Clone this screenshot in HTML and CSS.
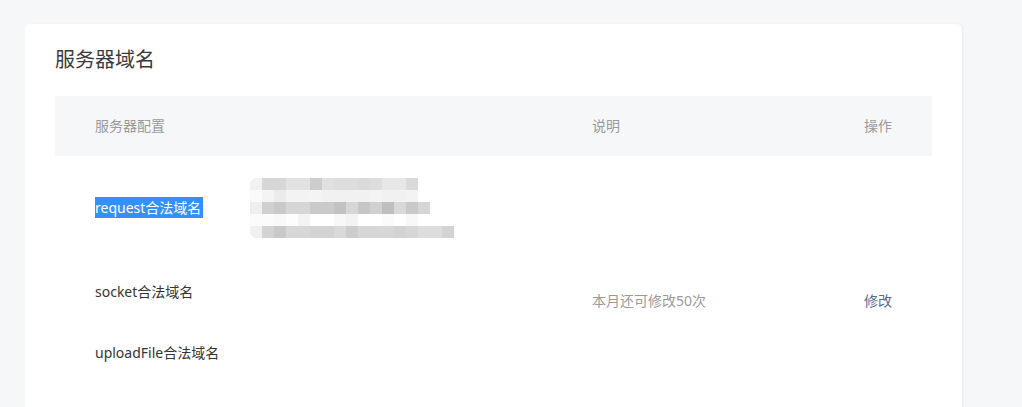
FILE: index.html
```html
<!DOCTYPE html>
<html lang="zh-CN">
<head>
<meta charset="utf-8">
<title>服务器域名</title>
<link rel="stylesheet" href="styles.css">
</head>
<body>
<div class="page">
  <section class="card">
    <h2 class="card-title">服务器域名</h2>
    <div class="table">
      <div class="thead">
        <div class="cell c1">服务器配置</div>
        <div class="cell c2">说明</div>
        <div class="cell c3">操作</div>
      </div>
      <div class="tbody">
        <div class="cell c1 list">
          <div class="item">
            <div class="label"><span class="selected">request合法域名 </span></div>
            <div class="values">
              <svg class="mosaic" width="204" height="60" viewBox="0 0 204 60">
                <g>
                  <rect x="0" y="0" width="12" height="12" fill="#f2f2f2"/>
                  <rect x="12" y="0" width="12" height="12" fill="#d7d7d7"/>
                  <rect x="24" y="0" width="12" height="12" fill="#d7d7d7"/>
                  <rect x="36" y="0" width="12" height="12" fill="#e2e2e2"/>
                  <rect x="48" y="0" width="12" height="12" fill="#e2e2e2"/>
                  <rect x="60" y="0" width="12" height="12" fill="#cdcdcd"/>
                  <rect x="72" y="0" width="12" height="12" fill="#e0e0e0"/>
                  <rect x="84" y="0" width="12" height="12" fill="#dddddd"/>
                  <rect x="96" y="0" width="12" height="12" fill="#dddddd"/>
                  <rect x="108" y="0" width="12" height="12" fill="#dadada"/>
                  <rect x="120" y="0" width="12" height="12" fill="#dddddd"/>
                  <rect x="132" y="0" width="12" height="12" fill="#e7e7e7"/>
                  <rect x="144" y="0" width="12" height="12" fill="#e7e7e7"/>
                  <rect x="156" y="0" width="12" height="12" fill="#dadada"/>
                </g>
                <g>
                  <rect x="0" y="12" width="12" height="12" fill="#fafafa"/>
                  <rect x="12" y="12" width="12" height="12" fill="#f4f4f4"/>
                  <rect x="24" y="12" width="12" height="12" fill="#ebebeb"/>
                  <rect x="36" y="12" width="12" height="12" fill="#f3f3f3"/>
                  <rect x="48" y="12" width="12" height="12" fill="#f3f3f3"/>
                  <rect x="60" y="12" width="12" height="12" fill="#f4f4f4"/>
                  <rect x="72" y="12" width="12" height="12" fill="#f1f1f1"/>
                  <rect x="84" y="12" width="12" height="12" fill="#f1f1f1"/>
                  <rect x="96" y="12" width="12" height="12" fill="#f1f1f1"/>
                  <rect x="108" y="12" width="12" height="12" fill="#f1f1f1"/>
                  <rect x="120" y="12" width="12" height="12" fill="#f3f3f3"/>
                  <rect x="132" y="12" width="12" height="12" fill="#f1f1f1"/>
                  <rect x="144" y="12" width="12" height="12" fill="#f1f1f1"/>
                  <rect x="156" y="12" width="12" height="12" fill="#f3f3f3"/>
                </g>
                <g>
                  <rect x="0" y="24" width="12" height="12" fill="#efefef"/>
                  <rect x="12" y="24" width="12" height="12" fill="#d0d0d0"/>
                  <rect x="24" y="24" width="12" height="12" fill="#c9c9c9"/>
                  <rect x="36" y="24" width="12" height="12" fill="#d6d6d6"/>
                  <rect x="48" y="24" width="12" height="12" fill="#d6d6d6"/>
                  <rect x="60" y="24" width="12" height="12" fill="#cacaca"/>
                  <rect x="72" y="24" width="12" height="12" fill="#cacaca"/>
                  <rect x="84" y="24" width="12" height="12" fill="#c2c2c2"/>
                  <rect x="96" y="24" width="12" height="12" fill="#d6d6d6"/>
                  <rect x="108" y="24" width="12" height="12" fill="#c6c6c6"/>
                  <rect x="120" y="24" width="12" height="12" fill="#d0d0d0"/>
                  <rect x="132" y="24" width="12" height="12" fill="#bfbfbf"/>
                  <rect x="144" y="24" width="12" height="12" fill="#d9d9d9"/>
                  <rect x="156" y="24" width="12" height="12" fill="#c9c9c9"/>
                  <rect x="168" y="24" width="12" height="12" fill="#d6d6d6"/>
                </g>
                <g>
                  <rect x="0" y="36" width="12" height="12" fill="#fbfbfb"/>
                  <rect x="12" y="36" width="12" height="12" fill="#fbfbfb"/>
                  <rect x="24" y="36" width="12" height="12" fill="#f8f8f8"/>
                  <rect x="36" y="36" width="12" height="12" fill="#fdfdfd"/>
                  <rect x="48" y="36" width="12" height="12" fill="#f3f3f3"/>
                  <rect x="84" y="36" width="12" height="12" fill="#f8f8f8"/>
                  <rect x="96" y="36" width="12" height="12" fill="#f3f3f3"/>
                  <rect x="132" y="36" width="12" height="12" fill="#fbfbfb"/>
                  <rect x="156" y="36" width="12" height="12" fill="#f8f8f8"/>
                </g>
                <g>
                  <rect x="0" y="48" width="12" height="12" fill="#f0f0f0"/>
                  <rect x="12" y="48" width="12" height="12" fill="#d3d3d3"/>
                  <rect x="24" y="48" width="12" height="12" fill="#c9c9c9"/>
                  <rect x="36" y="48" width="12" height="12" fill="#d7d7d7"/>
                  <rect x="48" y="48" width="12" height="12" fill="#d7d7d7"/>
                  <rect x="60" y="48" width="12" height="12" fill="#d3d3d3"/>
                  <rect x="72" y="48" width="12" height="12" fill="#d3d3d3"/>
                  <rect x="84" y="48" width="12" height="12" fill="#d9d9d9"/>
                  <rect x="96" y="48" width="12" height="12" fill="#cdcdcd"/>
                  <rect x="108" y="48" width="12" height="12" fill="#d7d7d7"/>
                  <rect x="120" y="48" width="12" height="12" fill="#d7d7d7"/>
                  <rect x="132" y="48" width="12" height="12" fill="#d7d7d7"/>
                  <rect x="144" y="48" width="12" height="12" fill="#d3d3d3"/>
                  <rect x="156" y="48" width="12" height="12" fill="#d7d7d7"/>
                  <rect x="168" y="48" width="12" height="12" fill="#dddddd"/>
                  <rect x="180" y="48" width="12" height="12" fill="#dddddd"/>
                  <rect x="192" y="48" width="12" height="12" fill="#d3d3d3"/>
                </g>
              </svg>
            </div>
          </div>
          <div class="item">
            <div class="label">socket合法域名</div>
            <div class="values"></div>
          </div>
          <div class="item">
            <div class="label">uploadFile合法域名</div>
            <div class="values"></div>
          </div>
        </div>
        <div class="cell c2 desc">本月还可修改50次</div>
        <div class="cell c3"><a class="link" href="#">修改</a></div>
      </div>
    </div>
  </section>
</div>
</body>
</html>
```

FILE: styles.css
```css
html, body {
  margin: 0;
  padding: 0;
  overflow: hidden;
  background: #f6f7f9;
}

body {
  font-family: "Noto Sans", "Noto Sans CJK SC", sans-serif;
  font-size: 14px;
  color: #353535;
}

.page {
  padding: 24px 0 0 25px;
}

.card {
  width: 937px;
  box-sizing: border-box;
  background: #ffffff;
  border-radius: 5px;
  box-shadow: 1px 0 2px rgba(0, 0, 0, 0.05);
  padding: 22px 30px 0 30px;
}

.card-title {
  margin: 0 0 22px 0;
  font-size: 20px;
  font-weight: 400;
  line-height: 28px;
  color: #3a3a3a;
}

.table {
  width: 877px;
}

.thead,
.tbody {
  display: grid;
  grid-template-columns: 497px 272px 108px;
}

.thead {
  background: #f6f7f9;
  height: 60px;
  align-items: center;
  color: #9a9a9a;
}

.cell {
  padding-left: 40px;
  line-height: 20px;
}

.tbody {
  align-items: center;
}

.list {
  display: flex;
  flex-direction: column;
  gap: 37px;
  padding-top: 17px;
  padding-bottom: 81px;
}

.item {
  display: flex;
  align-items: center;
  min-height: 24px;
}

.label {
  width: 155px;
  flex: none;
  line-height: 20px;
}

.selected {
  background: #3390ff;
  color: #ffffff;
  padding: 1px 2px 1px 0;
}

.values {
  min-height: 24px;
}

.mosaic {
  display: block;
  margin: 5px 0;
  border-radius: 6px 0 0 6px;
  filter: blur(0.4px);
}

.desc {
  color: #9a9a9a;
}

.link {
  color: #576b95;
  text-decoration: none;
}
```
